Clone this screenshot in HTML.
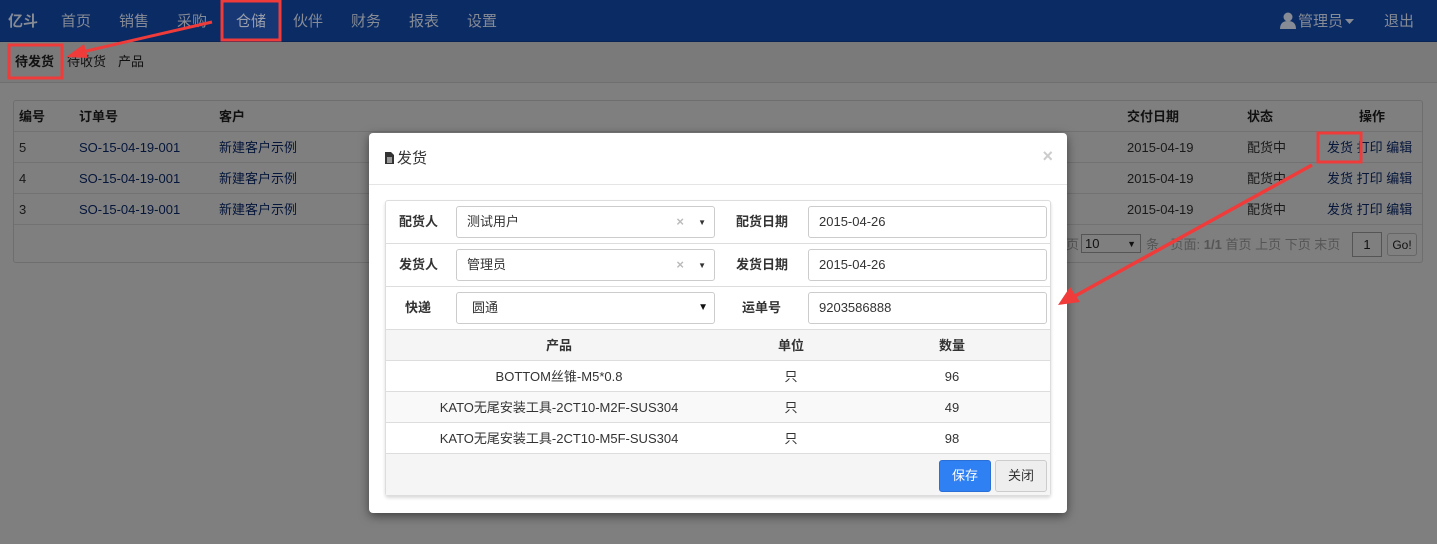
<!DOCTYPE html>
<html><head><meta charset="utf-8"><style>
*{box-sizing:border-box;margin:0;padding:0}
body{width:1437px;height:544px;overflow:hidden;background:#7f7f7f;font-family:"Liberation Sans","Noto Sans CJK SC",sans-serif;font-size:13px;line-height:16px;color:#1a1a1a;position:relative}
span,div{line-height:16px}
.nav{position:absolute;left:0;top:0;width:1437px;height:42px;background:#0a2b64;border-bottom:1px solid #092457}
.nav span{position:absolute;top:13px;font-size:15px;line-height:18px;color:#868b95}
.sub{position:absolute;left:0;top:42px;width:1437px;height:41px;background:#7a7a7a;border-bottom:1px solid #6f6f6f}
.sub span{position:absolute;top:12px;font-size:13px;color:#111}
.panel{position:absolute;left:13px;top:100px;width:1410px;height:163px;border:1px solid #6e6e6e;border-radius:3px;background:#7f7f7f}
.tr{position:absolute;left:0;width:1408px;border-bottom:1px solid #727272;height:31px}
.tr span{position:absolute;top:8px}
.b{font-weight:bold;color:#111}
.lk{color:#05163a}
.modal{position:absolute;left:369px;top:133px;width:698px;height:380px;background:#fff;border-radius:4px;box-shadow:0 3px 10px rgba(0,0,0,.5)}
.mh{height:52px;border-bottom:1px solid #e5e5e5;position:relative}
.inner{position:absolute;left:16px;top:67px;width:666px;height:296px;border:1px solid #ddd;border-radius:3px;box-shadow:0 2px 3px rgba(0,0,0,.15)}
.row{position:absolute;left:0;width:664px;height:43px;border-bottom:1px solid #ddd}
.lab{position:absolute;top:13px;font-weight:bold;font-size:13px;color:#333}
.inp{position:absolute;top:5px;height:32px;border:1px solid #ccc;border-radius:3px;font-size:13px;color:#333;padding:7px 10px}
.trr{position:absolute;left:0;width:664px;height:31px;border-bottom:1px solid #ddd}
.trr span{position:absolute;top:8px;transform:translateX(-50%);color:#333;white-space:nowrap}
</style></head><body>
<div class="nav">
<span style="left:8px;font-weight:bold">亿斗</span>
<span style="left:61px">首页</span><span style="left:119px">销售</span><span style="left:177px">采购</span>
<div style="position:absolute;left:222px;top:0;width:58px;height:41px;background:#163674"></div>
<span style="left:236px;color:#9aa0ab">仓储</span><span style="left:293px">伙伴</span><span style="left:351px">财务</span><span style="left:409px">报表</span><span style="left:467px">设置</span>
<svg style="position:absolute;left:1280px;top:12px" width="16" height="18"><circle cx="8" cy="5" r="4.5" fill="#868b95"/><path d="M0 17 Q0 9 8 9 Q16 9 16 17Z" fill="#868b95"/></svg>
<span style="left:1298px">管理员</span>
<svg style="position:absolute;left:1345px;top:19px" width="9" height="5"><path d="M0 0H9L4.5 5Z" fill="#868b95"/></svg>
<span style="left:1384px">退出</span>
</div>
<div class="sub"><span style="left:15px;font-weight:bold">待发货</span><span style="left:67px">待收货</span><span style="left:118px">产品</span></div>
<div class="panel">
<div class="tr" style="top:0"><span class="b" style="left:5px">编号</span><span class="b" style="left:65px">订单号</span><span class="b" style="left:205px">客户</span><span class="b" style="left:1113px">交付日期</span><span class="b" style="left:1233px">状态</span><span class="b" style="left:1345px">操作</span></div>
<div class="tr" style="top:31px"><span style="left:5px">5</span><span class="lk" style="left:65px">SO-15-04-19-001</span><span class="lk" style="left:205px">新建客户示例</span><span style="left:1113px">2015-04-19</span><span style="left:1233px">配货中</span><span class="lk" style="left:1313px">发货 打印 编辑</span></div>
<div class="tr" style="top:62px"><span style="left:5px">4</span><span class="lk" style="left:65px">SO-15-04-19-001</span><span class="lk" style="left:205px">新建客户示例</span><span style="left:1113px">2015-04-19</span><span style="left:1233px">配货中</span><span class="lk" style="left:1313px">发货 打印 编辑</span></div>
<div class="tr" style="top:93px"><span style="left:5px">3</span><span class="lk" style="left:65px">SO-15-04-19-001</span><span class="lk" style="left:205px">新建客户示例</span><span style="left:1113px">2015-04-19</span><span style="left:1233px">配货中</span><span class="lk" style="left:1313px">发货 打印 编辑</span></div>
<div style="position:absolute;left:1052px;top:136px;color:#555">页</div>
<div style="position:absolute;left:1067px;top:133px;width:60px;height:19px;border:1px solid #555;padding:1px 3px;color:#111">10<span style="position:absolute;right:4px;font-size:9px;top:1px">▼</span></div>
<div style="position:absolute;left:1132px;top:136px;color:#555">条 · 页面: <b>1/1</b> 首页 上页 下页 末页</div>
<div style="position:absolute;left:1338px;top:131px;width:30px;height:25px;border:1px solid #555;text-align:center;padding-top:4px;color:#111">1</div>
<div style="position:absolute;left:1373px;top:132px;width:30px;height:23px;border:1px solid #666;border-radius:3px;background:#808080;text-align:center;padding-top:3px;font-size:12px;color:#111">Go!</div>
</div>

<div class="modal">
<div class="mh">
<svg style="position:absolute;left:16px;top:19px" width="9" height="12"><path d="M0 0H6L9 3V12H0Z" fill="#333"/><path d="M2 6H7M2 8H7M2 10H7" stroke="#fff" stroke-width="1"/></svg>
<span style="position:absolute;left:28px;top:17px;font-size:15px;line-height:18px;color:#333">发货</span>
<span style="position:absolute;right:14px;top:14px;font-size:18px;line-height:18px;font-weight:bold;color:#ccc">×</span>
</div>
<div class="inner">
<div class="row" style="top:0"><span class="lab" style="left:13px">配货人</span><div class="inp" style="left:70px;width:259px">测试用户<span style="position:absolute;right:30px;top:7px;color:#bbb;font-weight:bold">×</span><span style="position:absolute;right:8px;top:8px;font-size:8px">▼</span></div><span class="lab" style="left:350px">配货日期</span><div class="inp" style="left:422px;width:239px">2015-04-26</div></div>
<div class="row" style="top:43px"><span class="lab" style="left:13px">发货人</span><div class="inp" style="left:70px;width:259px">管理员<span style="position:absolute;right:30px;top:7px;color:#bbb;font-weight:bold">×</span><span style="position:absolute;right:8px;top:8px;font-size:8px">▼</span></div><span class="lab" style="left:350px">发货日期</span><div class="inp" style="left:422px;width:239px">2015-04-26</div></div>
<div class="row" style="top:86px"><span class="lab" style="left:19px">快递</span><div class="inp" style="left:70px;width:259px;padding-left:15px">圆通<span style="position:absolute;right:6px;top:7px;font-size:10px;color:#111">▼</span></div><span class="lab" style="left:356px">运单号</span><div class="inp" style="left:422px;width:239px">9203586888</div></div>
<div class="trr" style="top:129px;background:#f5f5f5"><span class="b" style="left:173px;color:#333">产品</span><span class="b" style="left:405px;color:#333">单位</span><span class="b" style="left:566px;color:#333">数量</span></div>
<div class="trr" style="top:160px"><span style="left:173px">BOTTOM丝锥-M5*0.8</span><span style="left:405px">只</span><span style="left:566px">96</span></div>
<div class="trr" style="top:191px;background:#f9f9f9"><span style="left:173px">KATO无尾安装工具-2CT10-M2F-SUS304</span><span style="left:405px">只</span><span style="left:566px">49</span></div>
<div class="trr" style="top:222px"><span style="left:173px">KATO无尾安装工具-2CT10-M5F-SUS304</span><span style="left:405px">只</span><span style="left:566px">98</span></div>
<div style="position:absolute;left:0;top:253px;width:664px;height:41px;background:#f5f5f5"></div>
<div style="position:absolute;left:553px;top:259px;width:52px;height:32px;background:#2f80f3;border:1px solid #2a6fd6;border-radius:3px;color:#fff;text-align:center;padding-top:7px">保存</div>
<div style="position:absolute;left:609px;top:259px;width:52px;height:32px;background:#eee;border:1px solid #ccc;border-radius:3px;color:#333;text-align:center;padding-top:7px">关闭</div>
</div>
</div>

<svg style="position:absolute;left:0;top:0" width="1437" height="544">
<g fill="none" stroke="#f03b3b" stroke-width="3">
<rect x="9" y="45" width="53" height="33"/>
<rect x="222" y="1" width="58" height="39"/>
<rect x="1318" y="133" width="43" height="29"/>
</g>
<path d="M212 22 L82 52" stroke="#f03b3b" stroke-width="3"/>
<path d="M66 57 L84 44 L88 58Z" fill="#f03b3b"/>
<path d="M1312 165 L1075 296" stroke="#f03b3b" stroke-width="3.5"/>
<path d="M1058 305 L1070 287 L1080 302Z" fill="#f03b3b"/>
</svg>
</body></html>
